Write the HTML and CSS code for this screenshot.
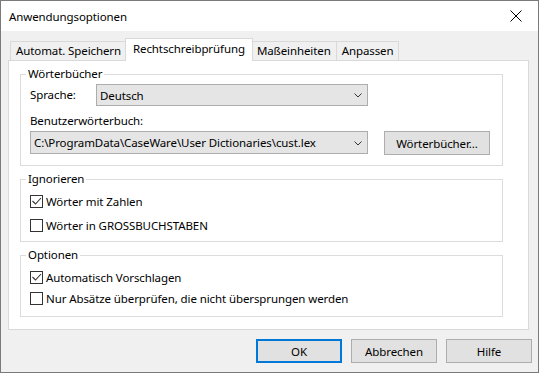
FILE: index.html
```html
<!DOCTYPE html>
<html lang="de">
<head>
    <meta charset="UTF-8">
    <title>Anwendungsoptionen</title>
    <link rel="stylesheet" href="styles.css">
</head>
<body>
    <div class="window">
        <div class="titlebar">
            <span class="title">Anwendungsoptionen</span>
            <svg class="close" width="12" height="12" viewBox="0 0 12 12">
                <path d="M0.5 0.5 L11.5 11.5 M11.5 0.5 L0.5 11.5" stroke="#000" stroke-width="1" fill="none"/>
            </svg>
        </div>
        <div class="dialog">
            <div class="tabs">
                <div class="tab">Automat. Speichern</div>
                <div class="tab active">Rechtschreibprüfung</div>
                <div class="tab">Maßeinheiten</div>
                <div class="tab">Anpassen</div>
            </div>
            <div class="panel">
                <fieldset class="group dict">
                    <legend>Wörterbücher</legend>
                    <div class="row first">
                        <span class="label short">Sprache:</span>
                        <div class="select lang">
                            <span>Deutsch</span>
                            <svg class="arrow" width="8" height="5" viewBox="0 0 8 5"><path d="M0.5 0.5 L4 4 L7.5 0.5" stroke="#333" fill="none"/></svg>
                        </div>
                    </div>
                    <div class="label">Benutzerwörterbuch:</div>
                    <div class="row second">
                        <div class="select path">
                            <span>C:\ProgramData\CaseWare\User Dictionaries\cust.lex</span>
                            <svg class="arrow" width="8" height="5" viewBox="0 0 8 5"><path d="M0.5 0.5 L4 4 L7.5 0.5" stroke="#333" fill="none"/></svg>
                        </div>
                        <button class="btn dicts">Wörterbücher...</button>
                    </div>
                </fieldset>

                <fieldset class="group ignore">
                    <legend>Ignorieren</legend>
                    <div class="check">
                        <span class="box checked"><svg width="11" height="11" viewBox="0 0 11 11"><path d="M1.5 5 L4.5 8 L10 2" stroke="#333" stroke-width="1.1" fill="none"/></svg></span>
                        Wörter mit Zahlen
                    </div>
                    <div class="check">
                        <span class="box"></span>
                        Wörter in GROSSBUCHSTABEN
                    </div>
                </fieldset>

                <fieldset class="group options">
                    <legend>Optionen</legend>
                    <div class="check">
                        <span class="box checked"><svg width="11" height="11" viewBox="0 0 11 11"><path d="M1.5 5 L4.5 8 L10 2" stroke="#333" stroke-width="1.1" fill="none"/></svg></span>
                        Automatisch Vorschlagen
                    </div>
                    <div class="check">
                        <span class="box"></span>
                        Nur Absätze überprüfen, die nicht übersprungen werden
                    </div>
                </fieldset>
            </div>
            <div class="buttons">
                <button class="btn default">OK</button>
                <button class="btn">Abbrechen</button>
                <button class="btn">Hilfe</button>
            </div>
        </div>
    </div>
</body>
</html>
```

FILE: styles.css
```css
* {
    box-sizing: border-box;
}
body {
    margin: 0;
    font-family: "Noto Sans", "Liberation Sans", sans-serif;
    font-size: 11.5px;
    letter-spacing: -0.1px;
    color: #000;
}
.window {
    width: 539px;
    height: 373px;
    border: 1px solid #7a7a7a;
    background-color: #f0f0f0;
    display: flex;
    flex-direction: column;
}
.titlebar {
    height: 30px;
    background-color: #fff;
    display: flex;
    align-items: center;
    justify-content: space-between;
    padding: 0 16px 0 8px;
}
.dialog {
    padding: 7px 6px 0 7px;
}
.tabs {
    display: flex;
    align-items: flex-end;
    height: 22px;
    padding-left: 2px;
}
.tab {
    height: 19px;
    line-height: 17px;
    padding: 0 5px;
    border: 1px solid #d9d9d9;
    border-bottom: none;
    background-color: #f0f0f0;
    white-space: nowrap;
}
.tab + .tab {
    border-left: none;
}
.tab.active {
    position: relative;
    z-index: 1;
    height: 23px;
    line-height: 20px;
    margin: 0 -2px -1px -2px;
    padding: 0 7px;
    border-left: 1px solid #d9d9d9;
    background-color: #fff;
}
.tab.active + .tab {
    border-left: 1px solid #d9d9d9;
}
.panel {
    width: 521px;
    height: 270px;
    background-color: #fff;
    border: 1px solid #d9d9d9;
    padding: 5px 0 0 11px;
}
.group {
    width: 483px;
    margin: 0 0 5px 0;
    padding: 0 0 0 9px;
    border: 1px solid #dcdcdc;
    min-width: 0;
}
.group legend {
    padding: 0 2px;
    margin-left: -4px;
    line-height: 16px;
}
.dict {
    padding-bottom: 10px;
}
.row {
    display: flex;
    align-items: flex-start;
}
.row.first {
    margin-top: 2px;
    align-items: center;
}
.row.second {
    margin-top: 2px;
}
.label {
    line-height: 16px;
    margin-top: 7px;
}
.label.short {
    width: 66px;
    margin-top: 0;
}
.select {
    display: flex;
    align-items: center;
    justify-content: space-between;
    background-color: #e5e5e5;
    border: 1px solid #adadad;
    padding: 0 5px 0 3px;
    white-space: nowrap;
}
.select.lang {
    width: 272px;
    height: 22px;
}
.select.path {
    width: 338px;
    height: 23px;
}
.arrow {
    margin-top: 1px;
}
.btn {
    font-family: inherit;
    font-size: inherit;
    letter-spacing: inherit;
    color: #000;
    background-color: #e1e1e1;
    border: 1px solid #adadad;
    padding: 0;
    height: 24px;
    width: 86px;
}
.btn.dicts {
    width: 106px;
    margin-left: 16px;
}
.btn.default {
    border: 2px solid #0078d7;
}
.ignore {
    padding-bottom: 7px;
}
.options {
    padding-bottom: 9px;
}
.check {
    display: flex;
    align-items: center;
    gap: 3px;
    height: 17px;
    line-height: 17px;
    white-space: nowrap;
}
.ignore .check {
    margin-top: 6px;
}
.ignore .check + .check {
    margin-top: 7px;
}
.options .check {
    margin-top: 6px;
}
.options .check + .check {
    margin-top: 4px;
}
.box {
    width: 13px;
    height: 13px;
    border: 1px solid #333;
    background-color: #fff;
    display: flex;
    align-items: center;
    justify-content: center;
}
.buttons {
    display: flex;
    justify-content: flex-end;
    gap: 9px;
    margin-top: 9px;
}
```
